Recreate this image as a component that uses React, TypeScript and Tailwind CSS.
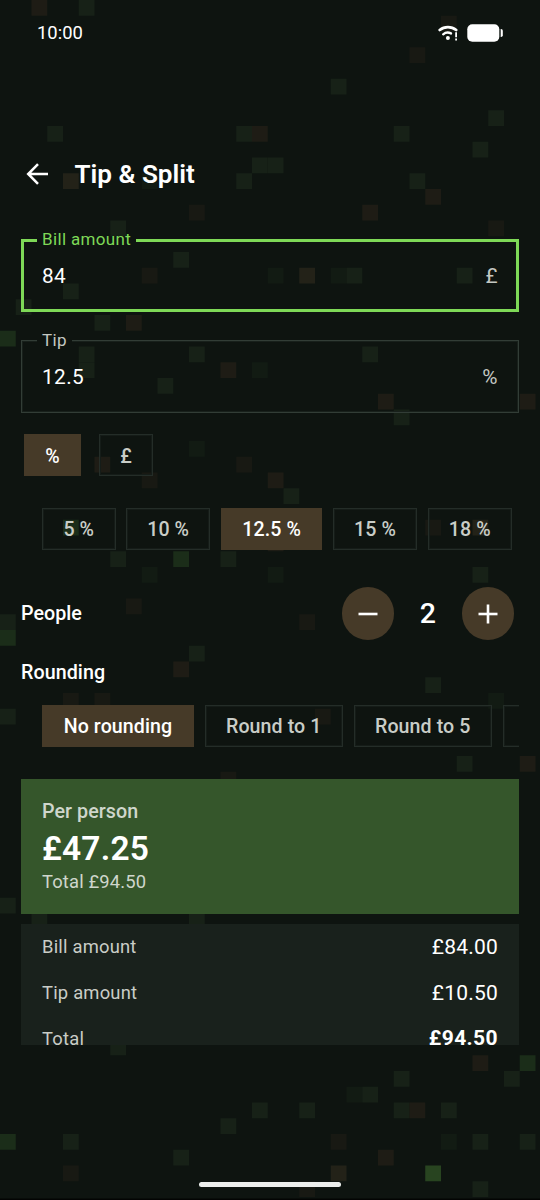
import React from "react";

type Tone = "g1" | "g2" | "g3" | "g4" | "b1" | "b2" | "o1";

const CELL = 15.75;

const TONES: Record<Tone, string> = {
  g1: "#121b13",
  g2: "#172117",
  g3: "#1b2d19",
  g4: "#284420",
  b1: "#181913",
  b2: "#1e1c15",
  o1: "#232218",
};

const SPECKS: [number, number, Tone][] = [
  [2, 0, "b2"], [5, 0, "g2"], [28, 1, "b1"], [26, 3, "b1"], [21, 5, "g2"], [31, 7, "g2"],
  [3, 8, "g2"], [15, 8, "g2"], [16, 8, "b2"], [25, 8, "g2"], [30, 9, "g2"], [16, 10, "g2"],
  [17, 10, "g2"], [4, 11, "o1"], [9, 11, "g1"], [15, 11, "g2"], [26, 11, "g2"], [27, 12, "b2"],
  [12, 13, "b1"], [23, 13, "b2"], [7, 14, "g2"], [31, 14, "b1"], [11, 16, "g2"], [9, 17, "b1"],
  [17, 17, "g1"], [19, 17, "o1"], [21, 17, "g1"], [22, 17, "g2"], [29, 17, "g2"], [4, 18, "g2"],
  [1, 19, "g2"], [6, 20, "g2"], [8, 20, "b2"], [0, 21, "g3"], [5, 22, "g2"], [12, 22, "g2"],
  [23, 22, "g2"], [5, 23, "g2"], [14, 23, "b2"], [16, 23, "g1"], [10, 24, "g2"], [24, 25, "b2"],
  [33, 25, "b2"], [25, 26, "g2"], [12, 28, "g1"], [6, 29, "b2"], [15, 29, "b1"], [9, 30, "b1"],
  [17, 30, "b2"], [18, 31, "g2"], [4, 33, "g3"], [27, 33, "b1"], [30, 33, "o1"], [17, 34, "b2"],
  [7, 35, "g2"], [11, 35, "g3"], [14, 35, "g2"], [9, 36, "g1"], [17, 36, "g1"], [30, 36, "g2"],
  [8, 38, "b1"], [0, 39, "g2"], [19, 39, "b1"], [0, 40, "g3"], [12, 41, "g2"], [11, 42, "b2"],
  [27, 43, "g2"], [4, 44, "b1"], [6, 44, "b1"], [31, 44, "g1"], [0, 45, "g2"], [20, 45, "b1"],
  [29, 48, "g2"], [33, 48, "b2"], [14, 49, "b1"], [0, 57, "g2"], [2, 58, "g2"], [12, 58, "g2"],
  [7, 66, "g2"], [30, 67, "b2"], [33, 67, "g3"], [25, 68, "g2"], [32, 68, "g2"], [22, 69, "g1"],
  [23, 69, "g2"], [16, 70, "g2"], [19, 70, "g2"], [25, 70, "g2"], [26, 70, "b2"], [28, 70, "g2"],
  [14, 71, "g2"], [0, 72, "g3"], [4, 72, "g2"], [21, 72, "b1"], [28, 72, "g1"], [30, 72, "g2"],
  [33, 72, "g2"], [11, 73, "g2"], [24, 73, "b2"], [4, 74, "b1"], [21, 74, "o1"], [27, 74, "g4"],
  [19, 75, "b1"], [30, 75, "g2"],
];

function Backdrop() {
  return (
    <svg className="absolute inset-0 -z-10" width="540" height="1200" aria-hidden="true">
      {SPECKS.map(([c, r, t]) => (
        <rect key={`${c}-${r}`} x={c * CELL} y={r * CELL} width={CELL} height={CELL} fill={TONES[t]} />
      ))}
      <rect x="0" y="1198.5" width="540" height="1.5" fill="#030403" />
    </svg>
  );
}

function StatusBar() {
  return (
    <div className="flex h-[65px] items-center justify-between pr-[37px] pl-[37px] text-white">
      <span className="text-[18.4px]">10:00</span>
      <div className="flex items-center gap-[9px]">
        <svg width="20" height="16" viewBox="0 0 20 16" fill="none" stroke="#fff" aria-hidden="true">
          <path d="M1.7 5C6.4 1.1 13.4 1.1 18.2 5" strokeWidth="2.7" strokeLinecap="round" />
          <path d="M5.2 9.3C7.2 7.6 10.3 7.1 13 8.4" strokeWidth="2.4" strokeLinecap="round" />
          <circle cx="9.9" cy="13" r="2" fill="#fff" stroke="none" />
          <path d="M18.1 7.3v5M18.1 13.6v1.9" strokeWidth="1.8" />
        </svg>
        <svg width="36" height="18" viewBox="0 0 36 18" fill="#fff" aria-hidden="true">
          <rect x="0.3" y="0.2" width="32" height="17.6" rx="5" />
          <path d="M33.7 5h.3a1.8 1.8 0 0 1 1.8 1.8v4.4A1.8 1.8 0 0 1 34 13h-.3z" />
        </svg>
      </div>
    </div>
  );
}

function Field({ label, value, unit, focused }: { label: string; value: string; unit: string; focused?: boolean }) {
  return (
    <fieldset
      className={
        focused
          ? "mt-[14px] h-[82px] shrink-0 border-[3px] border-[#7ed957] pr-[18px] pl-[13px]"
          : "mt-[18px] h-[83px] shrink-0 border border-[#323d36] pr-[20px] pl-[15px] shadow-[inset_0_0_0_1px_#18201b]"
      }
    >
      <legend
        className={
          focused
            ? "h-[20px] px-[5px] text-[17px] leading-[19px] tracking-[0.35px] text-[#7ed957]"
            : "h-[20px] bg-[#0e1410] px-[5px] text-[17px] leading-[20px] tracking-[0.3px] text-[#c4c8c2]"
        }
      >
        {label}
      </legend>
      <div
        className={`flex items-center justify-between pl-[5px] text-[20.8px] tracking-[0.4px] ${
          focused ? "h-[53px]" : "h-[56px]"
        }`}
      >
        <span className="text-white">{value}</span>
        <span className="text-[#c4c8c2]">{unit}</span>
      </div>
    </fieldset>
  );
}

type ChipProps = { children?: React.ReactNode; active?: boolean; width: string; pad?: string };

function Chip({ children, active, width, pad = "pt-[2px]" }: ChipProps) {
  return (
    <button
      className={`flex h-[42px] shrink-0 items-center justify-center text-[19.6px] font-medium tracking-[0.1px] whitespace-nowrap ${pad} ${width} ${
        active ? "bg-[#463a28] text-white" : "border border-[#242d28] text-[#c9cdc7] shadow-[inset_0_0_0_1px_#151c18]"
      }`}
    >
      {children}
    </button>
  );
}

function RoundButton({ plus }: { plus?: boolean }) {
  return (
    <button className="flex size-[52.5px] items-center justify-center rounded-full bg-[#463a28]">
      <svg width="20" height="20" viewBox="0 0 20 20" stroke="#fff" strokeWidth="2.6" aria-hidden="true">
        <path d="M.5 10h19" />
        {plus && <path d="M10 .5v19" />}
      </svg>
    </button>
  );
}

function Row({ label, value, bold }: { label: string; value: string; bold?: boolean }) {
  return (
    <div className="flex h-[46px] shrink-0 items-center justify-between">
      <span className="text-[18.4px] tracking-[0.2px] text-[#c9cdc7]">{label}</span>
      <span className={bold ? "text-[21px] font-bold tracking-[0.4px]" : "pt-[1px] text-[21px] tracking-[0.2px]"}>
        {value}
      </span>
    </div>
  );
}

export default function App() {
  return (
    <div className="relative isolate flex h-[1200px] w-[540px] flex-col overflow-hidden bg-[#0e1410] font-['Roboto',sans-serif] text-white">
      <Backdrop />
      <StatusBar />

      <header className="mt-[67px] flex h-[84px] items-center pl-[26px]">
        <svg width="23" height="22" viewBox="0 0 23 22" fill="none" stroke="#fff" strokeWidth="2.5" aria-hidden="true">
          <path d="M22 11H2.5M12 1.2L2.2 11l9.8 9.8" />
        </svg>
        <h1 className="ml-[25.5px] pt-[2px] text-[26.1px] font-semibold">Tip &amp; Split</h1>
      </header>

      <main className="mx-[21px] flex h-[829px] flex-col overflow-hidden">
        <Field label="Bill amount" value="84" unit="£" focused />
        <Field label="Tip" value="12.5" unit="%" />

        <div className="mt-[21px] ml-[3px] flex gap-[18px]">
          <Chip active width="w-[57px]" pad="pt-[4px]">%</Chip>
          <Chip width="w-[54px]" pad="pt-[4px]">£</Chip>
        </div>

        <div className="mt-[32px] ml-[21px] flex gap-[10.5px]">
          <Chip width="w-[73.5px]">5 %</Chip>
          <Chip width="w-[84.3px]">10 %</Chip>
          <Chip active width="w-[101.5px]">12.5 %</Chip>
          <Chip width="w-[84.3px]">15 %</Chip>
          <Chip width="w-[84.3px]">18 %</Chip>
        </div>

        <div className="mt-[37px] flex h-[53px] shrink-0 items-center justify-between pr-[5px]">
          <span className="pt-px text-[19.7px] font-medium">People</span>
          <div className="flex items-center">
            <RoundButton />
            <span className="w-[67.5px] pt-[1px] text-center text-[28.5px] font-medium">2</span>
            <RoundButton plus />
          </div>
        </div>

        <h2 className="mt-[21px] h-[24px] shrink-0 text-[19.7px] leading-[24px] font-medium tracking-[0.05px]">Rounding</h2>

        <div className="mt-[20px] ml-[21px] flex shrink-0 gap-[10.5px] overflow-hidden">
          <Chip active width="w-[152px]">No rounding</Chip>
          <Chip width="w-[138.5px]">Round to 1</Chip>
          <Chip width="w-[138.5px]">Round to 5</Chip>
          <Chip width="w-[150px]" />
        </div>

        <section className="mt-[31.5px] flex h-[135px] shrink-0 flex-col bg-[#35562b] px-[21px] pt-[19px]">
          <span className="text-[19.7px] leading-[27px] font-medium tracking-[0.05px] text-[#cfd6cc]">Per person</span>
          <span className="text-[33.5px] leading-[47px] font-semibold tracking-[0.2px]">£47.25</span>
          <span className="text-[18.4px] leading-[20px] tracking-[0.15px] text-[#cfd6cc]">Total £94.50</span>
        </section>

        <section className="mt-[10.5px] flex h-[160px] shrink-0 flex-col bg-[#19211c] px-[21px]">
          <Row label="Bill amount" value="£84.00" />
          <Row label="Tip amount" value="£10.50" />
          <Row label="Total" value="£94.50" bold />
        </section>
      </main>

      <div className="mt-[137px] h-[5px] w-[142px] shrink-0 self-center rounded-full bg-[#eceeec]" />
    </div>
  );
}
